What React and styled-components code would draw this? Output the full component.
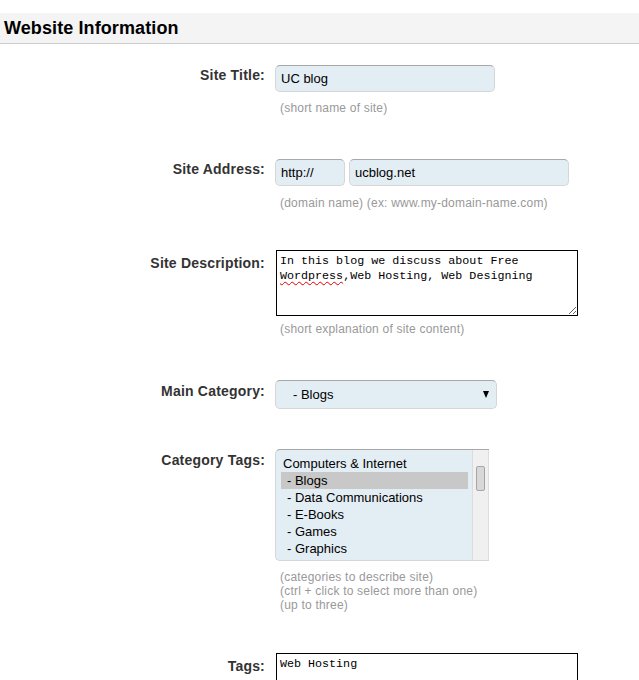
import React from "react";
import styled, { createGlobalStyle } from "styled-components";

const Global = createGlobalStyle`
  html, body { margin: 0; padding: 0; background: #fff; }
  body { font-family: "Liberation Sans", Arial, sans-serif; color: #000; }
`;

const Page = styled.div`
  padding-top: 13px;
`;

const Header = styled.h2`
  margin: 0;
  height: 30px;
  line-height: 30px;
  padding-left: 4px;
  background: #f4f4f4;
  border-bottom: 1px solid #cccccc;
  font-size: 18px;
  font-weight: bold;
  letter-spacing: 0.1px;
  color: #000;
`;

const Form = styled.form`
  padding-top: 21px;
`;

const Row = styled.div`
  display: grid;
  grid-template-columns: 265px 1fr;
  column-gap: 10px;
  margin-bottom: ${(p) => p.$gap || 0}px;
`;

const Label = styled.label`
  text-align: right;
  font-weight: bold;
  font-size: 14px;
  line-height: 17px;
  letter-spacing: 0.2px;
  color: #333;
  padding-top: ${(p) => p.$pt ?? 2}px;
`;

const Field = styled.div`
  display: flex;
  flex-direction: column;
  align-items: flex-start;
`;

const Inline = styled.div`
  display: flex;
  gap: 4px;
`;

const TextInput = styled.input`
  box-sizing: border-box;
  width: ${(p) => p.$w || 220}px;
  height: 27px;
  margin: 0;
  padding: 0 5px;
  border: 1px solid #d6d6d6;
  border-top-color: #a8a8a8;
  border-radius: 5px;
  background: #e3edf4;
  font-family: "Liberation Sans", Arial, sans-serif;
  font-size: 13px;
  color: #000;
  outline: none;
`;

const Hint = styled.div`
  margin-top: ${(p) => p.$mt || 9}px;
  padding-left: 5px;
  font-size: 12px;
  line-height: 14px;
  letter-spacing: 0.2px;
  color: #999;
`;

const TextBox = styled.div`
  box-sizing: border-box;
  width: 302px;
  height: 66px;
  margin-left: 1px;
  padding: 3px 3px;
  border: 1px solid #000;
  background: #fff;
  font-family: "Liberation Mono", "Courier New", monospace;
  font-size: 11.7px;
  line-height: 15px;
  color: #000;
  overflow: auto;
  resize: both;
  white-space: pre-wrap;
`;

const Misspelled = styled.span`
  text-decoration: underline wavy #e00000;
  text-decoration-thickness: 1px;
  text-decoration-skip-ink: none;
  text-underline-offset: 2px;
`;

const SelectWrap = styled.div`
  position: relative;
  width: 222px;
  &::after {
    content: "";
    position: absolute;
    right: 8px;
    top: 11px;
    border-left: 3.5px solid transparent;
    border-right: 3.5px solid transparent;
    border-top: 7px solid #000;
    pointer-events: none;
  }
`;

const Select = styled.select`
  box-sizing: border-box;
  width: 222px;
  height: 29px;
  margin: 0;
  padding: 0 0 0 17px;
  appearance: none;
  -webkit-appearance: none;
  border: 1px solid #d6d6d6;
  border-top-color: #a8a8a8;
  border-radius: 5px;
  background: #e3edf4;
  font-family: "Liberation Sans", Arial, sans-serif;
  font-size: 13px;
  color: #000;
  outline: none;
`;

const ListBox = styled.div`
  box-sizing: border-box;
  display: flex;
  width: 214px;
  height: 112px;
  border-top: 1px solid #a8a8a8;
  border-left: 1px solid #d6d6d6;
  border-bottom: 1px solid #d6d6d6;
  border-radius: 5px 0 0 5px;
  background: #e3edf4;
  overflow: hidden;
`;

const Options = styled.ul`
  flex: 1;
  margin: 0;
  padding: 5px 4px 0 5px;
  list-style: none;
`;

const Option = styled.li`
  height: 17px;
  line-height: 17px;
  font-size: 13px;
  color: #000;
  padding-left: ${(p) => (p.$sub ? 6 : 2)}px;
  background: ${(p) => (p.$selected ? "#c8c8c8" : "transparent")};
  white-space: nowrap;
`;

const Track = styled.div`
  width: 15px;
  background: #f0f0f0;
  border-left: 1px solid #dcdcdc;
  border-right: 1px solid #dcdcdc;
  padding-top: 17px;
  display: flex;
  justify-content: center;
  margin-top: -1px;
`;

const Thumb = styled.div`
  box-sizing: border-box;
  width: 9px;
  height: 25px;
  border: 1px solid #a6a6a6;
  border-radius: 2px;
  background: #d8d8d8;
`;

const categories = [
  { name: "Computers & Internet" },
  { name: "- Blogs", sub: true, selected: true },
  { name: "- Data Communications", sub: true },
  { name: "- E-Books", sub: true },
  { name: "- Games", sub: true },
  { name: "- Graphics", sub: true },
];

export default function App() {
  return (
    <Page>
      <Global />
      <Header>Website Information</Header>
      <Form onSubmit={(e) => e.preventDefault()}>
        <Row $gap={44}>
          <Label>Site Title:</Label>
          <Field>
            <TextInput defaultValue="UC blog" />
            <Hint $mt={9}>(short name of site)</Hint>
          </Field>
        </Row>

        <Row $gap={40}>
          <Label>Site Address:</Label>
          <Field>
            <Inline>
              <TextInput $w={70} defaultValue="http://" />
              <TextInput $w={220} defaultValue="ucblog.net" />
            </Inline>
            <Hint $mt={10}>(domain name) (ex: www.my-domain-name.com)</Hint>
          </Field>
        </Row>

        <Row $gap={44}>
          <Label $pt={5}>Site Description:</Label>
          <Field>
            <TextBox role="textbox" aria-multiline="true">
              In this blog we discuss about Free{"\n"}
              <Misspelled>Wordpress</Misspelled>,Web Hosting, Web Designing
            </TextBox>
            <Hint $mt={6}>(short explanation of site content)</Hint>
          </Field>
        </Row>

        <Row $gap={40}>
          <Label $pt={3}>Main Category:</Label>
          <Field>
            <SelectWrap>
              <Select defaultValue="blogs">
                <option value="blogs">- Blogs</option>
              </Select>
            </SelectWrap>
          </Field>
        </Row>

        <Row $gap={41}>
          <Label $pt={3}>Category Tags:</Label>
          <Field>
            <ListBox role="listbox" aria-multiselectable="true">
              <Options>
                {categories.map((c) => (
                  <Option key={c.name} $sub={c.sub} $selected={c.selected}>
                    {c.name}
                  </Option>
                ))}
              </Options>
              <Track>
                <Thumb />
              </Track>
            </ListBox>
            <Hint $mt={9}>
              (categories to describe site)
              <br />
              (ctrl + click to select more than one)
              <br />
              (up to three)
            </Hint>
          </Field>
        </Row>

        <Row>
          <Label $pt={5}>Tags:</Label>
          <Field>
            <TextBox role="textbox" aria-multiline="true">
              Web Hosting
            </TextBox>
          </Field>
        </Row>
      </Form>
    </Page>
  );
}
